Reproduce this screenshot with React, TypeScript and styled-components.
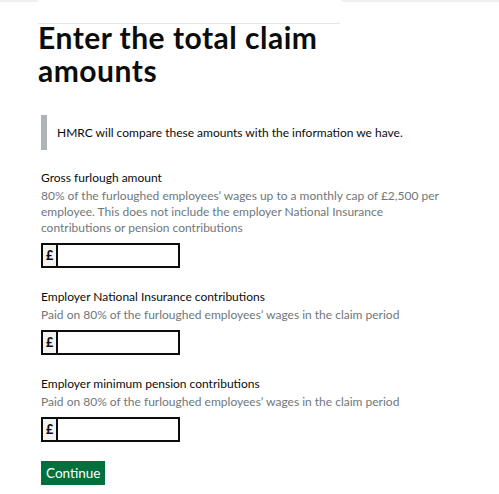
import styled, { createGlobalStyle } from "styled-components";

const GlobalStyle = createGlobalStyle`
  html, body {
    margin: 0;
    padding: 0;
    background: #ffffff;
  }
  body {
    font-family: Lato, "Liberation Sans", Arial, sans-serif;
    color: #0b0c0c;
  }
`;

type Field = {
  id: string;
  label: string;
  hint: string;
};

const fields: Field[] = [
  {
    id: "gross",
    label: "Gross furlough amount",
    hint:
      "80% of the furloughed employees’ wages up to a monthly cap of £2,500 per employee. This does not include the employer National Insurance contributions or pension contributions",
  },
  {
    id: "nic",
    label: "Employer National Insurance contributions",
    hint: "Paid on 80% of the furloughed employees’ wages in the claim period",
  },
  {
    id: "pension",
    label: "Employer minimum pension contributions",
    hint: "Paid on 80% of the furloughed employees’ wages in the claim period",
  },
];

const App = () => {
  return (
    <>
      <GlobalStyle />
      <TopStrip>
        <TopGap />
      </TopStrip>
      <Page>
        <Divider />
        <Heading>Enter the total claim amounts</Heading>
        <Inset>HMRC will compare these amounts with the information we have.</Inset>
        <Form onSubmit={(e) => e.preventDefault()}>
          {fields.map((f) => (
            <Group key={f.id}>
              <Label htmlFor={f.id}>{f.label}</Label>
              <Hint>{f.hint}</Hint>
              <InputWrap>
                <Prefix>£</Prefix>
                <Input id={f.id} type="text" />
              </InputWrap>
            </Group>
          ))}
          <Button type="submit">Continue</Button>
        </Form>
      </Page>
    </>
  );
};

export default App;

const TopStrip = styled.div`
  height: 2px;
  width: 100%;
  background: #efefef;
  display: flex;
`;

const TopGap = styled.div`
  margin-left: 38px;
  width: 304px;
  background: #ffffff;
`;

const Page = styled.div`
  padding: 0 0 0 41px;
`;

const Divider = styled.div`
  margin: 21px 0 0 -3px;
  width: 302px;
  height: 1px;
  background: #e6e6e6;
`;

const Heading = styled.h1`
  margin: -3px 0 0 -3px;
  width: 310px;
  font-size: 30px;
  line-height: 33px;
  font-weight: 700;
  letter-spacing: 0.5px;
  color: #0b0c0c;
`;

const Inset = styled.div`
  margin-top: 28px;
  border-left: 6px solid #b1b4b6;
  padding: 10px 0 10px 10px;
  font-size: 12px;
  line-height: 15px;
`;

const Form = styled.form`
  display: flex;
  flex-direction: column;
  align-items: flex-start;
  margin-top: 20px;
`;

const Group = styled.div`
  display: flex;
  flex-direction: column;
  margin-bottom: 21px;
  width: 410px;
`;

const Label = styled.label`
  font-size: 12px;
  line-height: 16px;
  color: #0b0c0c;
  margin-bottom: 2px;
`;

const Hint = styled.div`
  font-size: 12px;
  line-height: 16px;
  color: #6f777b;
  margin-bottom: 7px;
`;

const InputWrap = styled.div`
  display: flex;
  width: 139px;
  height: 25px;
  box-sizing: border-box;
  border: 2px solid #0b0c0c;
`;

const Prefix = styled.span`
  width: 13px;
  background: #f3f2f1;
  border-right: 2px solid #0b0c0c;
  font-size: 12.5px;
  font-weight: 900;
  display: flex;
  align-items: center;
  justify-content: center;
`;

const Input = styled.input`
  flex: 1;
  min-width: 0;
  border: 0;
  outline: none;
  padding: 0 4px;
  font: inherit;
  font-size: 13px;
  background: #ffffff;
`;

const Button = styled.button`
  margin-top: -2px;
  height: 24px;
  padding: 0 5px;
  border: 0;
  border-radius: 0;
  background: #00703c;
  box-shadow: 0 2px 0 #002d18;
  color: #ffffff;
  font-family: inherit;
  font-size: 13.5px;
  line-height: 24px;
  cursor: pointer;
`;
